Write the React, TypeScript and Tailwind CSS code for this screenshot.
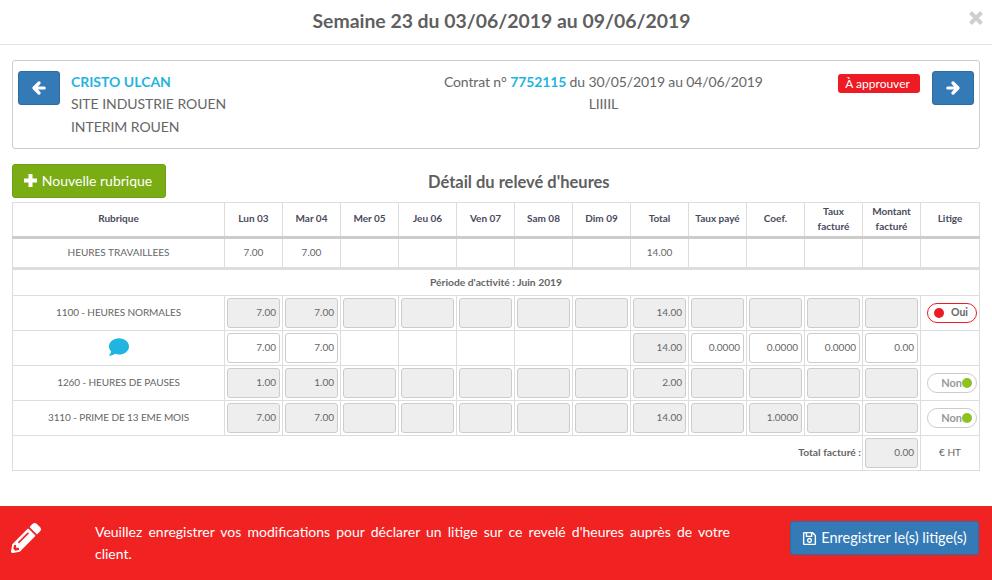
import React from "react";
import { FaComment, FaPencilAlt, FaRegSave } from "react-icons/fa";

const b = "border border-[#ddd]";
const days = ["Lun 03", "Mar 04", "Mer 05", "Jeu 06", "Ven 07", "Sam 08", "Dim 09"];

function Th({ children }: { children?: React.ReactNode }) {
  return <th className={`${b} border-b-[3px] border-b-[#ccc] text-[10px] leading-[15px] font-bold text-[#4a4a5e] text-center align-middle p-0 pb-[2px]`}>{children}</th>;
}
function Td({ children, label }: { children?: React.ReactNode; label?: boolean }) {
  return <td className={`${b} text-center align-middle text-[10px] text-[#666] p-0 pb-[2px] ${label ? "tracking-[-0.1px]" : ""}`}>{children}</td>;
}
function Box({ v, off = true }: { v?: string; off?: boolean }) {
  return (
    <td className={`${b} p-[2px] align-middle`}>
      <div className={`h-[30px] rounded-[3px] border border-[#ccc] flex items-center justify-end pr-[3px] pb-[1px] text-[10px] text-[#666] ${off ? "bg-[#eee]" : "bg-white"}`}>{v}</div>
    </td>
  );
}
function Toggle({ on }: { on?: boolean }) {
  return (
    <td className={`${b} p-0 align-middle`}>
      {on ? (
        <div className="ml-[6px] h-[20px] w-[50px] rounded-full border border-[#ed1c24] bg-white flex items-center pl-[6px] pr-[8px] justify-between text-[10.5px] font-bold text-[#666]">
          <span className="w-[10px] h-[10px] rounded-full bg-[#ed1c24]"></span>
          <span>Oui</span>
        </div>
      ) : (
        <div className="ml-[6px] h-[20px] w-[50px] rounded-full border border-[#ccc] bg-white flex items-center justify-end pr-[4px] text-[11px] font-bold text-[#999]">
          <span>Non</span>
          <span className="w-[10px] h-[10px] rounded-full bg-[#8dc21f]"></span>
        </div>
      )}
    </td>
  );
}
function Arrow({ right }: { right?: boolean }) {
  return (
    <svg width="14" height="14" viewBox="0 0 14 14" fill="none" stroke="white" strokeWidth="3.2" strokeLinecap="round" strokeLinejoin="round" className={right ? "" : "-scale-x-100"}>
      <path d="M1.8 7H11.5M7 2L12 7L7 12" />
    </svg>
  );
}

export default function App() {
  return (
    <div className="w-[992px] h-[580px] bg-white overflow-hidden flex flex-col text-[#666]" style={{ fontFamily: "Lato, sans-serif" }}>
      <div className="h-[45px] shrink-0 border-b border-[#e5e5e5] relative flex items-center justify-center">
        <h4 className="text-[19.4px] font-bold text-[#5f5f5f] leading-none mb-[3px] ml-[11px]">Semaine 23 du 03/06/2019 au 09/06/2019</h4>
        <svg width="14" height="14" viewBox="0 0 14 14" className="absolute left-[969px] top-[11px]" stroke="#cfcfcf" strokeWidth="4" fill="none"><path d="M1.5 1.5L12.5 12.5M12.5 1.5L1.5 12.5" /></svg>
      </div>

      <div className="mx-[12px] mt-[15px] h-[89px] shrink-0 rounded-[3px] border border-[#ccc] flex pl-[5px] pr-[5px] pt-[10px] text-[14px]">
        <button className="w-[42px] h-[34px] rounded-[3px] bg-[#337ab7] border border-[#2e6da4] flex items-center justify-center"><Arrow /></button>
        <div className="ml-[11px] w-[333px] leading-[22.4px]">
          <div className="font-bold text-[#1fb5e0]">CRISTO ULCAN</div>
          <div className="tracking-[-0.05px]">SITE INDUSTRIE ROUEN</div>
          <div className="tracking-[-0.05px]">INTERIM ROUEN</div>
        </div>
        <div className="w-[400px] text-center leading-[22.4px] tracking-[-0.12px]">
          <div>Contrat n° <span className="font-bold text-[#1fb5e0]">7752115</span> du 30/05/2019 au 04/06/2019</div>
          <div>LIIIIL</div>
        </div>
        <div className="ml-[35px] mt-[3px] w-[82px] h-[19px] rounded-[3px] bg-[#ed1c24] text-white text-[12px] flex items-center justify-center pr-[3px]">À approuver</div>
        <button className="ml-[12px] w-[42px] h-[34px] rounded-[3px] bg-[#337ab7] border border-[#2e6da4] flex items-center justify-center"><Arrow right /></button>
      </div>

      <div className="mx-[12px] mt-[15px] h-[34px] shrink-0 flex items-center relative">
        <button className="w-[154px] h-[34px] rounded-[3px] bg-[#7aad14] border border-[#6f9e12] text-white text-[14px] flex items-center justify-center gap-[5px] pr-[2px] pb-[1px]">
          <svg width="13" height="13" viewBox="0 0 13 13" fill="white"><path d="M4.5 0H8.5V4.5H13V8.5H8.5V13H4.5V8.5H0V4.5H4.5Z" /></svg>
          Nouvelle rubrique
        </button>
        <div className="absolute left-[416px] top-[8px] text-[16.5px] font-bold text-[#5f5f5f] leading-[20px]">Détail du relevé d'heures</div>
      </div>

      <table className="mx-[12px] mt-[4px] w-[967px] table-fixed border-collapse shrink-0">
        <colgroup>
          <col className="w-[212px]" />
          {Array.from({ length: 12 }).map((_, i) => <col key={i} className="w-[58px]" />)}
          <col className="w-[59px]" />
        </colgroup>
        <tbody>
          <tr className="h-[35px]">
            <Th>Rubrique</Th>
            {days.map((d) => <Th key={d}>{d}</Th>)}
            <Th>Total</Th><Th>Taux payé</Th><Th>Coef.</Th><Th>Taux<br />facturé</Th><Th>Montant<br />facturé</Th><Th>Litige</Th>
          </tr>
          <tr className="h-[31px]">
            <Td>HEURES TRAVAILLEES</Td><Td>7.00</Td><Td>7.00</Td><Td /><Td /><Td /><Td /><Td /><Td>14.00</Td><Td /><Td /><Td /><Td /><Td />
          </tr>
          <tr className="h-[27px]">
            <td colSpan={14} className={`${b} border-t-[3px] text-center align-middle text-[10.3px] font-bold text-[#666] p-0`}><span className="relative top-[0.5px]">Période d'activité : Juin 2019</span></td>
          </tr>
          <tr className="h-[35px]">
            <Td label>1100 - HEURES NORMALES</Td><Box v="7.00" /><Box v="7.00" /><Box /><Box /><Box /><Box /><Box /><Box v="14.00" /><Box /><Box /><Box /><Box /><Toggle on />
          </tr>
          <tr className="h-[35px]">
            <Td><FaComment className="inline-block text-[#1fb5e0] text-[20px]" /></Td>
            <Box v="7.00" off={false} /><Box v="7.00" off={false} /><Td /><Td /><Td /><Td /><Td /><Box v="14.00" />
            <Box v="0.0000" off={false} /><Box v="0.0000" off={false} /><Box v="0.0000" off={false} /><Box v="0.00" off={false} /><Td />
          </tr>
          <tr className="h-[35px]">
            <Td label>1260 - HEURES DE PAUSES</Td><Box v="1.00" /><Box v="1.00" /><Box /><Box /><Box /><Box /><Box /><Box v="2.00" /><Box /><Box /><Box /><Box /><Toggle />
          </tr>
          <tr className="h-[35px]">
            <Td label>3110 - PRIME DE 13 EME MOIS</Td><Box v="7.00" /><Box v="7.00" /><Box /><Box /><Box /><Box /><Box /><Box v="14.00" /><Box /><Box v="1.0000" /><Box /><Box /><Toggle />
          </tr>
          <tr className="h-[35px]">
            <td colSpan={12} className={`${b} text-right align-middle text-[10.3px] font-bold text-[#666] p-0 pb-[1px] pr-[1px]`}>Total facturé :</td>
            <Box v="0.00" />
            <Td>€ HT</Td>
          </tr>
        </tbody>
      </table>

      <div className="mt-auto h-[74px] shrink-0 bg-[#f12222] flex items-start text-white relative">
        <FaPencilAlt className="ml-[11px] mt-[17px] text-[30px] shrink-0" />
        <p className="ml-[54px] mt-[15px] w-[635px] text-[14px] leading-[22px] text-justify">Veuillez enregistrer vos modifications pour déclarer un litige sur ce revelé d'heures auprès de votre client.</p>
        <button className="ml-auto mr-[13px] mt-[15px] w-[189px] h-[34px] rounded-[3px] bg-[#337ab7] border border-[#2e6da4] text-white text-[14.5px] flex items-center justify-center gap-[4px]"><FaRegSave className="text-[15px]" />Enregistrer le(s) litige(s)</button>
      </div>
    </div>
  );
}
